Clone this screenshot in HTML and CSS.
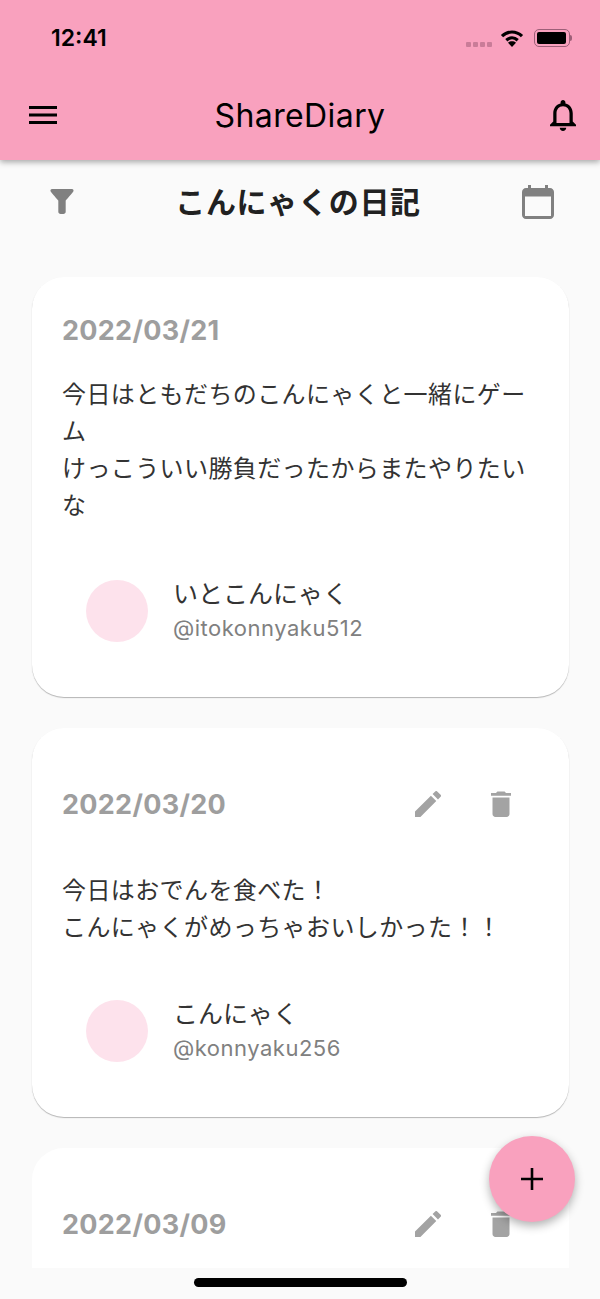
FILE: index.html
```html
<!DOCTYPE html>
<html lang="ja">
<head>
  <meta charset="UTF-8" />
  <meta name="viewport" content="width=device-width, initial-scale=1" />
  <title>ShareDiary</title>
  <link rel="stylesheet" href="styles.css">
</head>
<body>
  <div class="app">
    <header class="appbar">
      <div class="status">
        <span class="time">12:41</span>
        <div class="status-icons">
          <span class="signal"><i></i><i></i><i></i><i></i></span>
          <svg class="wifi" width="24" height="18" viewBox="0 0 24 18"><path class="wifi-arc" d="M2 7.200C7.800 1.600 16.200 1.600 22 7.200M6.300 11.200c3.400-3.100 8-3.100 11.400 0"/><path d="M12 18l-4-4.300c2.300-1.900 5.700-1.900 8 0z"/></svg>
          <span class="battery"><span class="battery-fill"></span></span>
          <span class="battery-nub"></span>
        </div>
      </div>
      <div class="toolbar">
        <svg class="menu-icon" width="30" height="20" viewBox="0 0 30 20"><path d="M1 1h28v3H1zM1 8.500h28v3H1zM1 16h28v3H1z"/></svg>
        <h1 class="app-title">ShareDiary</h1>
        <svg class="bell-icon" width="26" height="31" viewBox="4 2.500 16 19.500" preserveAspectRatio="none"><path d="M12 22c1.100 0 2-.9 2-2h-4c0 1.100.9 2 2 2zm6-6v-5c0-3.070-1.630-5.640-4.500-6.320V4c0-.83-.67-1.500-1.500-1.500s-1.500.67-1.500 1.500v.68C7.640 5.360 6 7.920 6 11v5l-2 2v1h16v-1l-2-2zm-2 1H8v-6c0-2.480 1.510-4.500 4-4.500s4 2.020 4 4.500v6z"/></svg>
      </div>
    </header>

    <div class="subhead">
      <svg class="filter-icon" width="24" height="25" viewBox="0 0 26 28" preserveAspectRatio="none"><path d="M.6 2.500C.2 1.400.8 0 2.200 0h21.600c1.400 0 2 1.400 1.600 2.500C24.800 3.600 17 13 17 13v12.500c0 1.400-1.100 2.500-2.500 2.500h-3C10.100 28 9 26.900 9 25.500V13S1.200 3.600.6 2.500z"/></svg>
      <h2 class="page-title">こんにゃくの日記</h2>
      <svg class="calendar-icon" width="32" height="34" viewBox="0 0 32 34"><path d="M28 3h-2V0h-3v3H9V0H6v3H4C1.800 3 0 4.800 0 7v23c0 2.200 1.800 4 4 4h24c2.200 0 4-1.800 4-4V7c0-2.200-1.800-4-4-4zm1 28H3V11.500h26V31z"/></svg>
    </div>

    <main class="list">
      <article class="card card-first">
        <div class="card-head"><span class="date">2022/03/21</span></div>
        <p class="body">今日はともだちのこんにゃくと一緒にゲーム<br>けっこういい勝負だったからまたやりたいな</p>
        <div class="author">
          <span class="avatar"></span>
          <div class="who">
            <span class="name">いとこんにゃく</span>
            <span class="handle">@itokonnyaku512</span>
          </div>
        </div>
      </article>

      <article class="card">
        <div class="card-head">
          <span class="date">2022/03/20</span>
          <div class="actions">
            <svg class="act" width="26" height="26" viewBox="0 0 26 26"><path d="M0 20.600V26h5.400L21.300 10.100l-5.400-5.400L0 20.600zM25.600 5.800c.6-.6.6-1.400 0-2L22.200.4c-.6-.6-1.400-.6-2 0l-2.600 2.600 5.400 5.400 2.600-2.600z"/></svg>
            <svg class="act" width="20" height="26" viewBox="0 0 20 26"><path d="M1.500 23.100c0 1.600 1.300 2.900 2.900 2.900h11.200c1.600 0 2.900-1.300 2.900-2.900V6.500h-17v16.600zM20 2h-5l-1.400-1.500H6.400L5 2H0v2.700h20V2z"/></svg>
          </div>
        </div>
        <p class="body">今日はおでんを食べた！<br>こんにゃくがめっちゃおいしかった！！</p>
        <div class="author">
          <span class="avatar"></span>
          <div class="who">
            <span class="name">こんにゃく</span>
            <span class="handle">@konnyaku256</span>
          </div>
        </div>
      </article>

      <article class="card card-cut">
        <div class="card-head">
          <span class="date">2022/03/09</span>
          <div class="actions">
            <svg class="act" width="26" height="26" viewBox="0 0 26 26"><path d="M0 20.600V26h5.400L21.300 10.100l-5.400-5.400L0 20.600zM25.600 5.800c.6-.6.6-1.400 0-2L22.200.4c-.6-.6-1.400-.6-2 0l-2.600 2.600 5.400 5.400 2.600-2.600z"/></svg>
            <svg class="act" width="20" height="26" viewBox="0 0 20 26"><path d="M1.500 23.100c0 1.600 1.300 2.900 2.900 2.900h11.200c1.600 0 2.900-1.300 2.900-2.900V6.500h-17v16.600zM20 2h-5l-1.400-1.500H6.400L5 2H0v2.700h20V2z"/></svg>
          </div>
        </div>
      </article>
    </main>

    <div class="home-bar"><span class="home-indicator"></span></div>

    <button class="fab" type="button" aria-label="add">
      <svg width="22" height="22" viewBox="0 0 22 22"><path d="M9.700 0h2.600v9.700H22v2.600h-9.700V22H9.700v-9.700H0V9.700h9.700z"/></svg>
    </button>
  </div>
</body>
</html>
```

FILE: styles.css
```css
* {
  box-sizing: border-box;
}
html,
body {
  margin: 0;
  padding: 0;
}
body {
  font-family: Inter, "Noto Sans CJK JP", sans-serif;
  background: #fafafa;
  color: #212121;
}
.app {
  position: relative;
  width: 600px;
  height: 1299px;
  overflow: hidden;
  display: flex;
  flex-direction: column;
  background: #fafafa;
}

/* app bar */
.appbar {
  flex: none;
  height: 160px;
  background: #f9a1be;
  box-shadow: 0 2px 6px rgba(0, 0, 0, 0.35);
  position: relative;
  z-index: 2;
  color: #000;
}
.status {
  height: 76px;
  display: flex;
  align-items: center;
  justify-content: space-between;
  padding: 0 28px 0 51px;
}
.time {
  font-size: 23px;
  font-weight: 600;
}
.status-icons {
  display: flex;
  align-items: center;
}
.signal {
  display: flex;
  gap: 2px;
  margin: 12px 8px 0 0;
}
.signal i {
  width: 5px;
  height: 5px;
  border-radius: 1px;
  background: #c97c98;
}
.wifi {
  margin-right: 10px;
}
.wifi-arc {
  fill: none;
  stroke: #000;
  stroke-width: 3.200px;
}
.battery {
  width: 36px;
  height: 18px;
  border: 1.500px solid #9d5f78;
  border-radius: 5px;
  padding: 2px;
  display: block;
}
.battery-fill {
  display: block;
  height: 100%;
  width: 29px;
  background: #000;
  border-radius: 2px;
}
.battery-nub {
  width: 2px;
  height: 6px;
  background: #9d5f78;
  border-radius: 0 2px 2px 0;
}
.toolbar {
  height: 84px;
  display: grid;
  grid-template-columns: 1fr auto 1fr;
  align-items: center;
  padding: 0 28px 6px;
}
.bell-icon {
  justify-self: end;
  margin-right: -4px;
}
.app-title {
  margin: 0;
  font-size: 32px;
  font-weight: 400;
  letter-spacing: 0.4px;
}

/* sub header */
.subhead {
  flex: none;
  height: 86px;
  display: flex;
  align-items: center;
  justify-content: space-between;
  padding: 0 46px 3px 50px;
}
.page-title {
  margin: -3px 0 0;
  font-size: 30px;
  font-weight: 700;
  letter-spacing: 0.7px;
  color: #212121;
}
.filter-icon,
.calendar-icon {
  fill: #808080;
}

/* cards */
.list {
  flex: none;
  height: 1022px;
  overflow: hidden;
  padding: 31px 31px 0 32px;
  display: flex;
  flex-direction: column;
  gap: 31px;
}
.card {
  flex: none;
  background: #fff;
  border-radius: 32px;
  box-shadow: 0 1px 1px rgba(0, 0, 0, 0.28);
  padding: 0 31px 0 30px;
}
.card-cut {
  height: 200px;
  box-shadow: none;
}
.card-head {
  height: 144px;
  padding-top: 8px;
  display: flex;
  align-items: center;
  justify-content: space-between;
}
.card-first .card-head {
  height: 99px;
  padding-top: 7px;
}
.date {
  font-size: 27px;
  font-weight: 700;
  letter-spacing: 0.3px;
  color: #9e9e9e;
}
.actions {
  display: flex;
  align-items: center;
  gap: 50px;
  margin-right: 27px;
}
.act {
  fill: #a3a3a3;
}
.body {
  margin: 0;
  font-size: 24px;
  line-height: 37px;
  letter-spacing: 0.4px;
  width: 474px;
  color: #333;
}
.author {
  display: flex;
  align-items: center;
  gap: 25px;
  margin-top: 53px;
  padding-left: 24px;
  padding-bottom: 54px;
}
.card-first .author {
  margin-top: 55px;
}
.avatar {
  width: 62px;
  height: 62px;
  border-radius: 50%;
  background: #fde2ec;
}
.who {
  display: flex;
  flex-direction: column;
}
.name {
  font-size: 25px;
  line-height: 30px;
  margin-bottom: 4px;
  color: #333;
}
.handle {
  font-size: 22px;
  line-height: 30px;
  letter-spacing: 0.5px;
  color: #808080;
}

/* bottom */
.home-bar {
  height: 31px;
  background: #fafafa;
  position: absolute;
  left: 0;
  right: 0;
  bottom: 0;
  display: flex;
  justify-content: center;
  padding-top: 10px;
}
.home-indicator {
  width: 213px;
  height: 9px;
  border-radius: 5px;
  background: #000;
}
.fab {
  position: absolute;
  left: 489px;
  top: 1136px;
  width: 86px;
  height: 86px;
  border: none;
  padding: 0;
  border-radius: 50%;
  background: #f9a1be;
  box-shadow: 0 4px 10px rgba(0, 0, 0, 0.3);
  display: flex;
  align-items: center;
  justify-content: center;
}
```
